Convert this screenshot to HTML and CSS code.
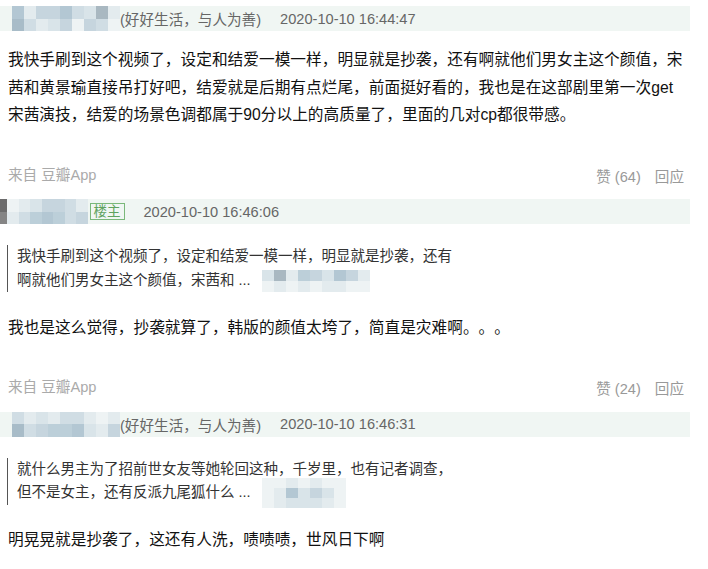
FILE: index.html
```html
<!DOCTYPE html>
<html lang="zh-CN">
<head>
    <meta charset="UTF-8">
    <meta name="viewport" content="width=device-width, initial-scale=1.0">
    <title>回应</title>
    <link rel="stylesheet" href="styles.css">
</head>
<body>
    <div class="thread">

        <div class="comment">
            <div class="meta">
                <span class="mosaic name-a">
                    <i class="k6"></i><i class="k1"></i><i class="k4"></i><i class="k4"></i><i class="k6"></i><i class="k3"></i><i class="k2"></i><i class="k8"></i><i class="k1"></i>
                    <i class="k7"></i><i class="k3"></i><i class="k1"></i><i class="k2"></i><i class="k4"></i><i class="k0"></i><i class="k4"></i><i class="k3"></i><i class="k0"></i>
                </span>
                <span class="sign">(好好生活，与人为善)</span>
                <span class="time">2020-10-10 16:44:47</span>
            </div>
            <p class="text">我快手刷到这个视频了，设定和结爱一模一样，明显就是抄袭，还有啊就他们男女主这个颜值，宋茜和黄景瑜直接吊打好吧，结爱就是后期有点烂尾，前面挺好看的，我也是在这部剧里第一次get宋茜演技，结爱的场景色调都属于90分以上的高质量了，里面的几对cp都很带感。</p>
            <div class="footer">
                <span class="from">来自 豆瓣App</span>
                <span class="actions"><a>赞 (64)</a><a>回应</a></span>
            </div>
        </div>

        <div class="comment">
            <div class="meta">
                <span class="mosaic name-b">
                    <i class="kd"></i><i class="k0"></i><i class="k1"></i><i class="k2"></i><i class="k4"></i><i class="k4"></i><i class="k3"></i><i class="k1"></i>
                    <i class="kd2"></i><i class="k1"></i><i class="k3"></i><i class="k5"></i><i class="k6"></i><i class="k5"></i><i class="k3"></i><i class="k4"></i>
                </span>
                <span class="badge">楼主</span>
                <span class="time">2020-10-10 16:46:06</span>
            </div>
            <blockquote class="quote">
                我快手刷到这个视频了，设定和结爱一模一样，明显就是抄袭，还有啊就他们男女主这个颜值，宋茜和 ...<span class="mosaic quote-a">
                    <i class="k2"></i><i class="k8"></i><i class="k1"></i><i class="k5"></i><i class="k4"></i><i class="k2"></i><i class="k6"></i><i class="k4"></i><i class="k1"></i>
                    <i class="k0"></i><i class="k1"></i><i class="k0"></i><i class="k1"></i><i class="k0"></i><i class="k1"></i><i class="k1"></i><i class="k0"></i><i class="k0"></i>
                </span>
            </blockquote>
            <p class="text reply">我也是这么觉得，抄袭就算了，韩版的颜值太垮了，简直是灾难啊。。。</p>
            <div class="footer">
                <span class="from">来自 豆瓣App</span>
                <span class="actions"><a>赞 (24)</a><a>回应</a></span>
            </div>
        </div>

        <div class="comment">
            <div class="meta">
                <span class="mosaic name-a">
                    <i class="k3"></i><i class="k1"></i><i class="k2"></i><i class="k1"></i><i class="k3"></i><i class="k3"></i><i class="k1"></i><i class="k0"></i><i class="k1"></i>
                    <i class="k7"></i><i class="k3"></i><i class="k4"></i><i class="k5"></i><i class="k5"></i><i class="k6"></i><i class="k2"></i><i class="k1"></i><i class="k4"></i>
                </span>
                <span class="sign">(好好生活，与人为善)</span>
                <span class="time">2020-10-10 16:46:31</span>
            </div>
            <blockquote class="quote">
                就什么男主为了招前世女友等她轮回这种，千岁里，也有记者调查，但不是女主，还有反派九尾狐什么 ...<span class="mosaic quote-b">
                    <i class="k0"></i><i class="k0"></i><i class="k1"></i><i class="k0"></i><i class="k1"></i><i class="k0"></i><i class="k0"></i>
                    <i class="k0"></i><i class="k1"></i><i class="k6"></i><i class="k2"></i><i class="k4"></i><i class="k2"></i><i class="k0"></i>
                    <i class="k0"></i><i class="k1"></i><i class="k2"></i><i class="k2"></i><i class="k2"></i><i class="k1"></i><i class="k0"></i>
                </span>
            </blockquote>
            <p class="text reply">明晃晃就是抄袭了，这还有人洗，啧啧啧，世风日下啊</p>
        </div>

    </div>
</body>
</html>
```

FILE: styles.css
```css
body {
    margin: 0;
    padding: 6px 0 0;
    font-family: "Liberation Sans", "Noto Sans CJK SC", sans-serif;
    text-spacing-trim: space-all;
    background-color: #fff;
    color: #111;
}
.thread {
    width: 690px;
}
.comment + .comment {
    margin-top: 12.5px;
}
.meta {
    display: flex;
    align-items: center;
    height: 25px;
    padding-left: 12px;
    background-color: #f0f6f3;
    font-size: 14.6px;
    color: #666;
}
.comment:nth-child(2) .meta {
    padding-left: 0;
}
.time {
    margin-left: 19px;
}
.badge {
    margin-left: 2px;
    padding: 0 3px;
    border: 1px solid #7ab87a;
    font-size: 13.5px;
    line-height: 15px;
    color: #5fa35f;
}
.text {
    margin: 15px 0 0;
    padding: 0 4px 0 8px;
    font-size: 15.7px;
    line-height: 27.5px;
    color: #111;
}
.text.reply {
    margin-top: 21.5px;
    margin-bottom: 5px;
}
.quote {
    width: 440px;
    margin: 21px 0 0 7px;
    padding-left: 9px;
    border-left: 1px solid #555;
    font-size: 14.5px;
    line-height: 23.5px;
    color: #333;
}
.footer {
    display: flex;
    justify-content: space-between;
    margin-top: 36px;
    padding: 0 6px 0 8px;
    font-size: 14.6px;
    line-height: 20px;
    color: #aaa;
}
.actions {
    display: flex;
    gap: 14px;
    padding-top: 2px;
    color: #999;
}

/* pixelated names */
.mosaic {
    display: inline-grid;
}
.mosaic i {
    display: block;
}
.name-a {
    grid-template-columns: repeat(9, 12px);
    grid-auto-rows: 12.5px;
}
.name-b {
    grid-template-columns: 7px repeat(7, 11.5px);
    grid-auto-rows: 12.5px;
}
.quote-a {
    grid-template-columns: repeat(9, 12px);
    grid-auto-rows: 11px;
    margin-left: 11px;
    vertical-align: middle;
}
.quote-b {
    grid-template-columns: repeat(7, 12px);
    grid-auto-rows: 10px;
    margin: -4px 0 -4px 11px;
    vertical-align: middle;
}
.k0 { background-color: #eef3f4; }
.k1 { background-color: #e3ebee; }
.k2 { background-color: #d9e4e9; }
.k3 { background-color: #d0dde4; }
.k4 { background-color: #c6d5de; }
.k5 { background-color: #bccfd9; }
.k6 { background-color: #b3c7d3; }
.k7 { background-color: #a8bcc8; }
.k8 { background-color: #a9b8c1; }
.kd { background-color: #6c6c6c; }
.kd2 { background-color: #858585; }
```
